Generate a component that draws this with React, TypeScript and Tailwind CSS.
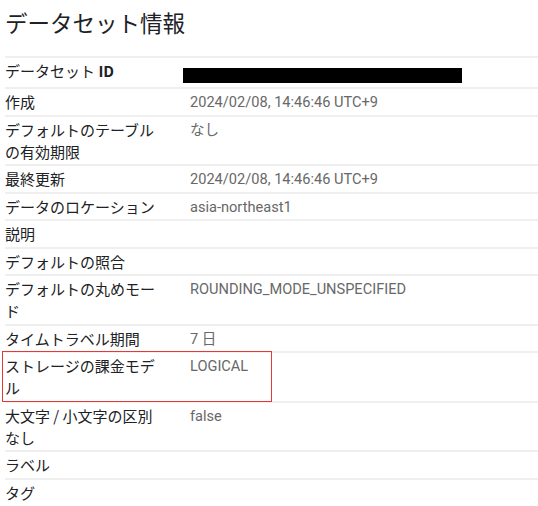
import React from "react";

type Row = { label: React.ReactNode; value?: React.ReactNode; tall?: boolean; highlight?: boolean };

const rows: Row[] = [
  {
    label: (
      <>
        データセット <span className="font-semibold">ID</span>
      </>
    ),
    value: <div className="mt-[8px] ml-[-7px] h-[15px] w-[279px] bg-black" />,
    tall: true,
  },
  { label: "作成", value: "2024/02/08, 14:46:46 UTC+9" },
  { label: "デフォルトのテーブルの有効期限", value: "なし" },
  { label: "最終更新", value: "2024/02/08, 14:46:46 UTC+9" },
  { label: "データのロケーション", value: "asia-northeast1" },
  { label: "説明" },
  { label: "デフォルトの照合" },
  { label: "デフォルトの丸めモード", value: "ROUNDING_MODE_UNSPECIFIED" },
  { label: "タイムトラベル期間", value: "7 日" },
  { label: "ストレージの課金モデル", value: "LOGICAL", highlight: true },
  { label: "大文字 / 小文字の区別なし", value: "false" },
  { label: "ラベル" },
  { label: "タグ" },
];

export default function App() {
  return (
    <div className="h-[506px] w-[538px] overflow-hidden bg-white pl-[5px]">
      <h1
        className="pt-[7px] pb-[19px] text-[22.5px] leading-[30px] font-normal text-[#202124]"
        style={{ fontFamily: '"Noto Sans CJK JP", sans-serif' }}
      >
        データセット情報
      </h1>
      <div className="border-t-2 border-[#efefef]">
        {rows.map((r, i) => (
          <div
            key={i}
            className={`relative flex ${i < rows.length - 1 ? "border-b-2 border-[#efefef]" : ""} ${r.tall ? "min-h-[31px]" : ""}`}
          >
            {r.highlight && (
              <div className="pointer-events-none absolute top-[-2px] bottom-[-1px] left-[-3px] w-[270px] border border-[#e53935]" />
            )}
            <div
              className="w-[185px] shrink-0 pt-[2px] pb-[1.5px] pr-[26px] text-[15px] leading-[22px] text-[#202124]"
              style={{ fontFamily: '"Noto Sans CJK JP", sans-serif' }}
            >
              {r.label}
            </div>
            <div
              className="flex-1 pt-[2px] pb-[1.5px] text-[14.6px] leading-[22px] text-[#686868]"
              style={{ fontFamily: 'Roboto, "Noto Sans CJK JP", sans-serif' }}
            >
              {r.value}
            </div>
          </div>
        ))}
      </div>
    </div>
  );
}
